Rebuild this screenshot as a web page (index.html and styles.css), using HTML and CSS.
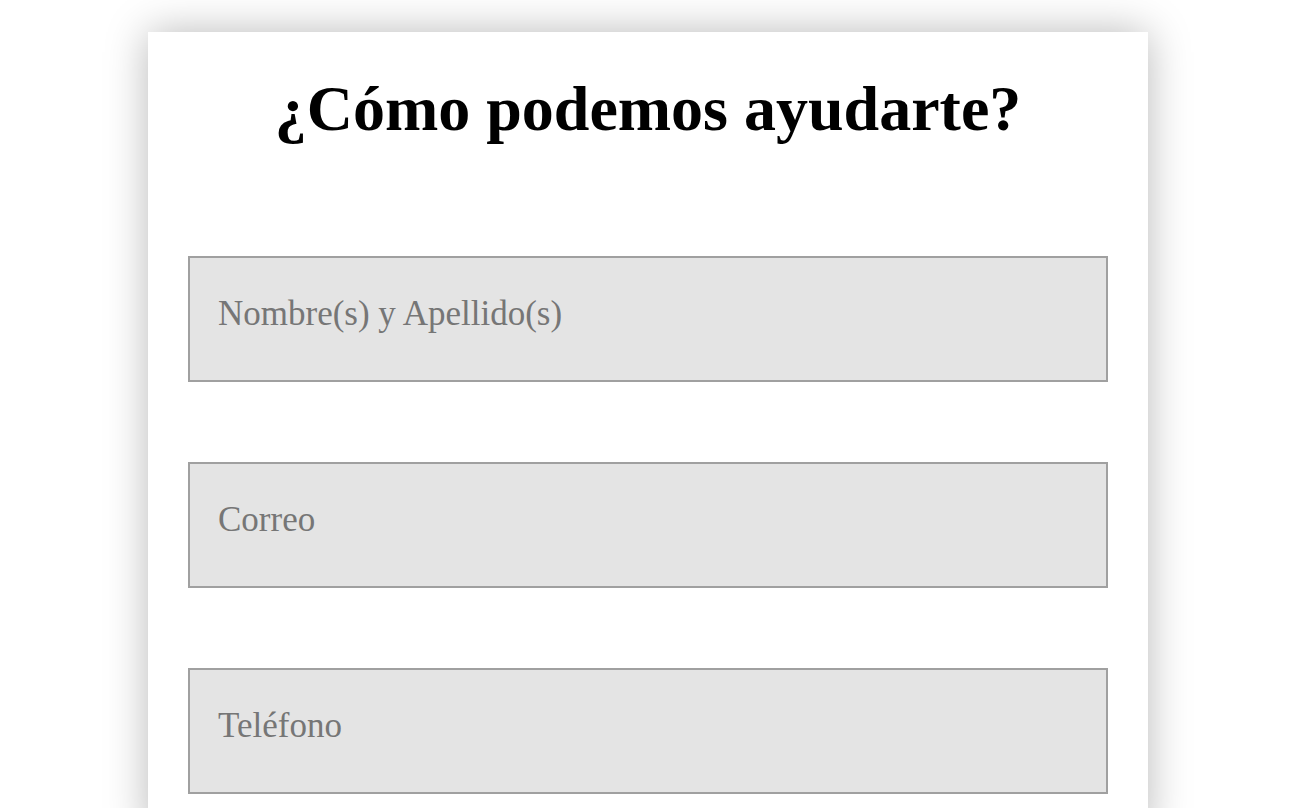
FILE: index.html
```html
<!DOCTYPE html>
<html lang="es">
<head>
<meta charset="utf-8">
<title>Contacto</title>
<link rel="stylesheet" href="styles.css">
</head>
<body>
<main class="card">
  <h1 class="title">¿Cómo podemos ayudarte?</h1>
  <form class="form">
    <input class="field" type="text" placeholder="Nombre(s) y Apellido(s)">
    <input class="field" type="email" placeholder="Correo">
    <input class="field" type="tel" placeholder="Teléfono">
  </form>
</main>
</body>
</html>
```
FILE: styles.css
```css
html, body {
  margin: 0;
  background: #ffffff;
  overflow: hidden;
}
body {
  padding: 0 4px 0 0;
  font-family: "Liberation Serif", "Times New Roman", serif;
}
.card {
  width: 1000px;
  margin: 32px auto 0;
  background: #ffffff;
  box-shadow: 0 0 40px rgba(0, 0, 0, 0.28);
  padding: 0 40px 40px;
  box-sizing: border-box;
}
.title {
  margin: 0;
  padding: 40px 0 0;
  font-size: 64px;
  line-height: 73px;
  font-weight: bold;
  text-align: center;
  color: #000;
}
.form {
  display: flex;
  flex-direction: column;
  gap: 80px;
  padding-top: 111px;
}
.field {
  display: block;
  width: 100%;
  height: 126px;
  box-sizing: border-box;
  border: 2px solid #a0a0a0;
  background: #e4e4e4;
  padding: 0 28px 10px;
  font-family: "Liberation Serif", "Times New Roman", serif;
  font-size: 35px;
  color: #333;
  outline: none;
  border-radius: 0;
}
.field::placeholder {
  color: #767676;
  opacity: 1;
}
```
